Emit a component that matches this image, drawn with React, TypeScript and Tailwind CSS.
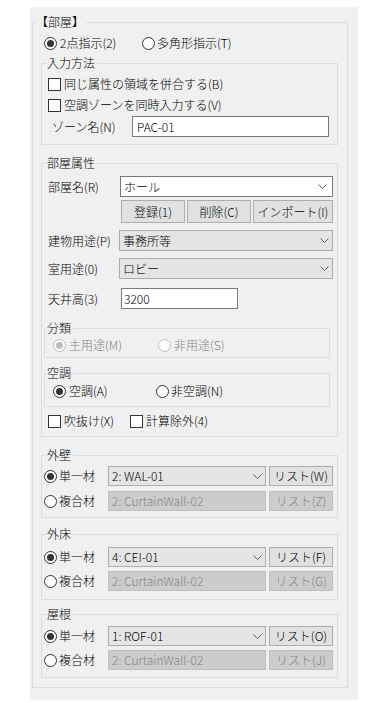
import type { ReactNode } from "react";

function Group({
  label,
  className = "",
  legend = "ml-[5px]",
  children,
}: {
  label: string;
  className?: string;
  legend?: string;
  children: ReactNode;
}) {
  return (
    <fieldset className={`border border-[#dcdcdc] ${className}`}>
      <legend className={`pr-[2px] leading-[14px] ${legend}`}>{label}</legend>
      {children}
    </fieldset>
  );
}

function Radio({ checked = false, disabled = false }: { checked?: boolean; disabled?: boolean }) {
  const ring = disabled ? "#bcbcbc" : "#333333";
  return (
    <svg width="13" height="13" viewBox="0 0 13 13" className="shrink-0">
      <circle cx="6.5" cy="6.5" r="6" fill="#ffffff" stroke={ring} />
      {checked && <circle cx="6.5" cy="6.5" r="3.5" fill={ring} />}
    </svg>
  );
}

function Check() {
  return <span className="h-[13px] w-[13px] shrink-0 border border-[#333333] bg-white" />;
}

function Chevron({ disabled = false }: { disabled?: boolean }) {
  return (
    <svg width="9" height="5" viewBox="0 0 9 5" className="shrink-0">
      <path d="M0.5 0.5 L4.5 4.5 L8.5 0.5" fill="none" stroke={disabled ? "#bfbfbf" : "#606060"} />
    </svg>
  );
}

function Combo({
  value,
  className,
  kind = "list",
}: {
  value: string;
  className: string;
  kind?: "edit" | "list" | "off";
}) {
  const skin =
    kind === "edit"
      ? "bg-white border-[#7a7a7a]"
      : kind === "off"
      ? "bg-[#cccccc] border-[#bfbfbf] text-[#838383]"
      : "bg-[#e5e5e5] border-[#adadad]";
  return (
    <div className={`flex items-center justify-between border pl-[3px] ${skin} ${className}`}>
      <span className="leading-[14px] whitespace-nowrap">{value}</span>
      <Chevron disabled={kind === "off"} />
    </div>
  );
}

function Btn({ label, className, off = false }: { label: string; className: string; off?: boolean }) {
  return (
    <button
      type="button"
      className={`flex items-center justify-center border leading-[14px] whitespace-nowrap ${
        off ? "bg-[#cccccc] border-[#bfbfbf] text-[#838383]" : "bg-[#e1e1e1] border-[#adadad]"
      } ${className}`}
    >
      {label}
    </button>
  );
}

function MaterialRow({
  checked,
  label,
  value,
  list,
  off = false,
  className = "",
}: {
  checked: boolean;
  label: string;
  value: string;
  list: string;
  off?: boolean;
  className?: string;
}) {
  return (
    <div className={`flex h-[20px] items-center pl-[2px] ${className}`}>
      <div className="flex w-[64px] items-center">
        <Radio checked={checked} />
        <span className="ml-[2px] leading-[14px]">{label}</span>
      </div>
      <Combo kind={off ? "off" : "list"} value={value} className="h-[20px] w-[158px] pr-[3px]" />
      <Btn off={off} label={list} className="ml-[3px] h-[20px] w-[64px]" />
    </div>
  );
}

function MaterialGroup({
  label,
  single,
  singleList,
  multiList,
  className,
  gap,
}: {
  label: string;
  single: string;
  singleList: string;
  multiList: string;
  className: string;
  gap: string;
}) {
  return (
    <Group label={label} className={`ml-[8px] mr-[9px] ${className}`}>
      <MaterialRow checked label="単一材" value={single} list={singleList} />
      <MaterialRow checked={false} off label="複合材" value="2: CurtainWall-02" list={multiList} className={gap} />
    </Group>
  );
}

export default function App() {
  return (
    <div className="min-h-screen bg-white pl-[30px] pt-[7px] font-['Noto_Sans_CJK_JP',sans-serif] text-[12px] font-light text-black">
      <div className="w-[328px] bg-[#f0f0f0] pb-[12px] pl-[2px] pr-[10px] pt-[8px]">
        <Group label="【部屋】" legend="ml-[3px]" className="pb-[9px] pt-[4px]">
          {/* 指示方法 */}
          <div className="flex h-[20px] items-center pl-[11px]">
            <div className="flex w-[98px] items-center">
              <Radio checked />
              <span className="ml-[3px] leading-[14px]">2点指示(2)</span>
            </div>
            <Radio />
            <span className="ml-[2px] leading-[14px]">多角形指示(T)</span>
          </div>

          {/* 入力方法 */}
          <Group label="入力方法" className="ml-[8px] mr-[9px] mt-[3px] pb-[7px] pt-[4px]">
            <div className="flex h-[20px] items-center pl-[6px]">
              <Check />
              <span className="ml-[3px] leading-[14px]">同じ属性の領域を併合する(B)</span>
            </div>
            <div className="mt-[1px] flex h-[20px] items-center pl-[6px]">
              <Check />
              <span className="ml-[3px] leading-[14px]">空調ゾーンを同時入力する(V)</span>
            </div>
            <div className="mt-[1px] flex h-[21px] items-center pl-[10px]">
              <span className="w-[80px] leading-[14px]">ゾーン名(N)</span>
              <div className="flex h-[21px] w-[197px] items-center border border-[#7a7a7a] bg-white pl-[4px] leading-[14px]">
                PAC-01
              </div>
            </div>
          </Group>

          {/* 部屋属性 */}
          <Group label="部屋属性" className="ml-[8px] mr-[9px] mt-[11px] pb-[7px] pt-[6px]">
            <div className="flex h-[21px] items-center pl-[6px]">
              <span className="w-[72px] leading-[14px]">部屋名(R)</span>
              <Combo kind="edit" value="ホール" className="h-[21px] w-[213px] pr-[5px]" />
            </div>
            <div className="mt-[3px] flex h-[23px] gap-[2px] pl-[79px]">
              <Btn label="登録(1)" className="h-[23px] w-[64px]" />
              <Btn label="削除(C)" className="h-[23px] w-[64px]" />
              <Btn label="インポート(I)" className="h-[23px] w-[80px]" />
            </div>
            <div className="mt-[7px] flex h-[21px] items-center pl-[6px]">
              <span className="w-[71px] leading-[14px]">建物用途(P)</span>
              <Combo value="事務所等" className="h-[21px] w-[214px] pr-[3px]" />
            </div>
            <div className="mt-[7px] flex h-[21px] items-center pl-[6px]">
              <span className="w-[71px] leading-[14px]">室用途(0)</span>
              <Combo value="ロビー" className="h-[21px] w-[214px] pr-[3px]" />
            </div>
            <div className="mt-[9px] flex h-[21px] items-center pl-[6px]">
              <span className="w-[73px] leading-[14px]">天井高(3)</span>
              <div className="flex h-[21px] w-[117px] items-center border border-[#7a7a7a] bg-white pl-[2px] leading-[14px]">
                3200
              </div>
            </div>

            <Group label="分類" legend="ml-[2px]" className="ml-[2px] mr-[7px] mt-[12px] pb-[4px] pt-[2px]">
              <div className="flex h-[16px] items-center pl-[8px] text-[#808080]">
                <div className="flex w-[105px] items-center">
                  <Radio checked disabled />
                  <span className="ml-[3px] leading-[14px]">主用途(M)</span>
                </div>
                <Radio disabled />
                <span className="ml-[3px] leading-[14px]">非用途(S)</span>
              </div>
            </Group>

            <Group label="空調" legend="ml-[2px]" className="ml-[2px] mr-[7px] mt-[8px] pb-[7px] pt-[3px]">
              <div className="flex h-[16px] items-center pl-[8px]">
                <div className="flex w-[103px] items-center">
                  <Radio checked />
                  <span className="ml-[3px] leading-[14px]">空調(A)</span>
                </div>
                <Radio />
                <span className="ml-[2px] leading-[14px]">非空調(N)</span>
              </div>
            </Group>

            <div className="mt-[6px] flex h-[16px] items-center pl-[6px]">
              <div className="flex w-[82px] items-center">
                <Check />
                <span className="ml-[3px] leading-[14px]">吹抜け(X)</span>
              </div>
              <Check />
              <span className="ml-[3px] leading-[14px]">計算除外(4)</span>
            </div>
          </Group>

          <MaterialGroup
            label="外壁"
            single="2: WAL-01"
            singleList="リスト(W)"
            multiList="リスト(Z)"
            className="mt-[11px] pb-[6px] pt-[4px]"
            gap="mt-[5px]"
          />
          <MaterialGroup
            label="外床"
            single="4: CEI-01"
            singleList="リスト(F)"
            multiList="リスト(G)"
            className="mt-[9px] pb-[8px] pt-[6px]"
            gap="mt-[4px]"
          />
          <MaterialGroup
            label="屋根"
            single="1: ROF-01"
            singleList="リスト(O)"
            multiList="リスト(J)"
            className="mt-[7px] pb-[7px] pt-[5px]"
            gap="mt-[4px]"
          />
        </Group>
      </div>
    </div>
  );
}
